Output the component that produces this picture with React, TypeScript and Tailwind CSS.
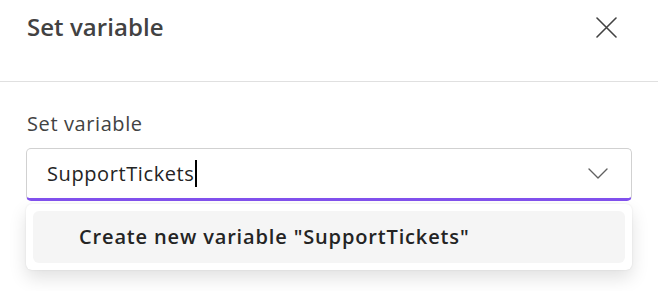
import { useState } from "react";

const font = { fontFamily: '"Open Sans", "Noto Sans", sans-serif' };

const CloseIcon = () => (
  <svg width="21" height="21" viewBox="0 0 21 21" fill="none">
    <path d="M1 1L20 20M20 1L1 20" stroke="#424242" strokeWidth="1.6" strokeLinecap="round" />
  </svg>
);

const Chevron = () => (
  <svg width="20" height="11" viewBox="0 0 20 11" fill="none">
    <path d="M1 1L10 10L19 1" stroke="#616161" strokeWidth="1.4" strokeLinecap="round" strokeLinejoin="round" />
  </svg>
);

export default function App() {
  const [value] = useState<string>("SupportTickets");

  return (
    <div className="w-[658px] h-[291px] bg-white overflow-hidden" style={font}>
      <div className="flex justify-between items-start h-[82px] border-b border-[#e0e0e0] pl-[27px] pr-[41px] pt-[11px]">
        <p className="text-[24px] leading-[32px] font-semibold text-[#424242] tracking-[0.05px]">Set variable</p>
        <button className="mt-[6px]">
          <CloseIcon />
        </button>
      </div>
      <div className="flex flex-col px-[26px] pt-[28px]">
        <label className="text-[20px] leading-[28px] text-[#424242] pl-[1px] tracking-[0.6px]">Set variable</label>
        <div className="mt-[10px] h-[53px] flex items-center justify-between border border-[#d1d1d1] border-b-[3px] border-b-[#8251ee] rounded-[5px] pl-[20px] pr-[23px]">
          <div className="flex items-center">
            <span className="text-[20px] leading-[28px] text-[#242424] tracking-[0.6px]">{value}</span>
            <span className="w-[2px] h-[27px] bg-black ml-[1px]" />
          </div>
          <Chevron />
        </div>
        <div className="mt-[3px] bg-white rounded-[6px] p-[7px] shadow-[0_8px_18px_rgba(0,0,0,0.12),0_0_2px_rgba(0,0,0,0.1)]">
          <div className="h-[52px] flex items-center rounded-[6px] bg-[#f5f5f5] pl-[46px]">
            <span className="text-[20px] leading-[28px] font-semibold text-[#242424] tracking-[0.85px]">
              Create new variable "{value}"
            </span>
          </div>
        </div>
      </div>
    </div>
  );
}
